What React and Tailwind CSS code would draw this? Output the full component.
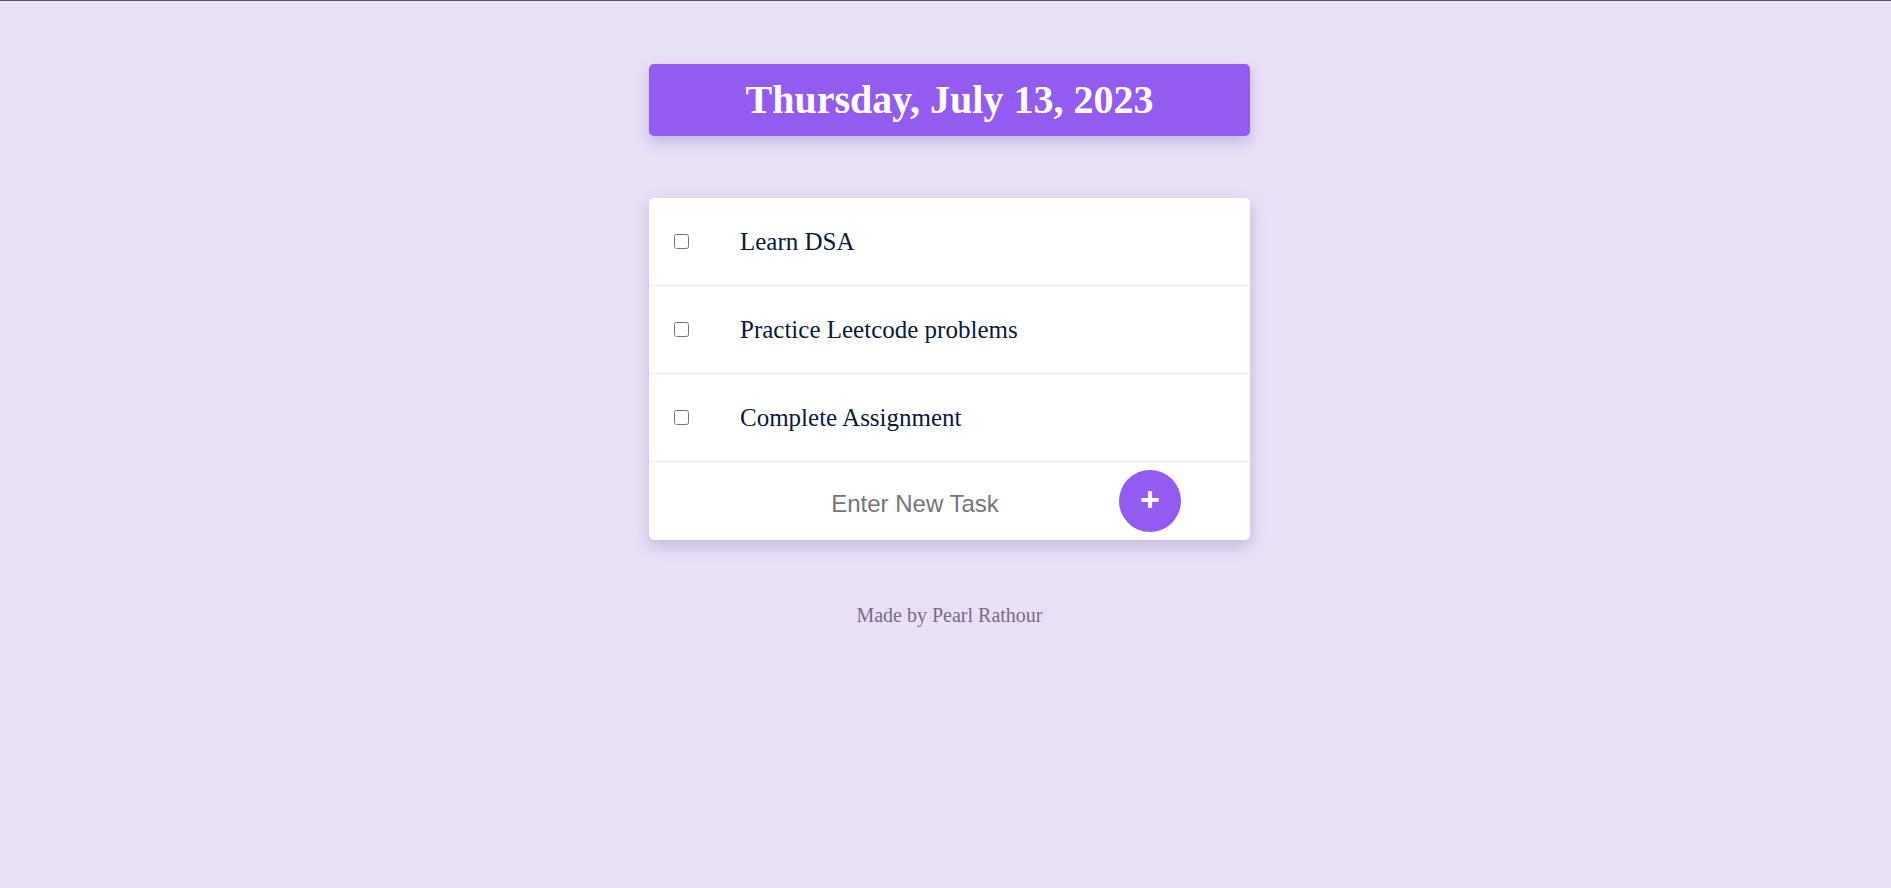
import React from "react";

const tasks = ["Learn DSA", "Practice Leetcode problems", "Complete Assignment"];

export default function App() {
  return (
    <div className="min-h-[888px] w-full bg-[#e9e0f8] border-t border-[#555555] flex flex-col items-center pl-[8px]" style={{ fontFamily: '"Liberation Serif", "Times New Roman", serif' }}>
      <div className="mt-[63px] w-[601px] h-[72px] rounded-[5px] bg-[#935bf0] flex items-center justify-center shadow-[0_6px_14px_rgba(90,60,140,0.25)]">
        <h1 className="text-white font-bold text-[40px] leading-none">Thursday, July 13, 2023</h1>
      </div>

      <div className="mt-[62px] w-[601px] bg-white rounded-[5px] shadow-[0_6px_16px_rgba(90,60,140,0.25)] overflow-hidden">
        {tasks.map((t) => (
          <div key={t} className="h-[88px] flex items-center border-b border-[#eeeeee]">
            <input type="checkbox" className="ml-[25px] w-[15px] h-[15px] m-0" />
            <span className="ml-[51px] text-[25px] text-[#061a40] leading-none">{t}</span>
          </div>
        ))}
        <div className="h-[78px] flex items-center justify-center gap-[7px]">
          <input
            type="text"
            placeholder="Enter New Task"
            className="w-[394px] mt-[6px] text-center text-[24px] outline-none bg-transparent placeholder:text-[#757575] text-[#333]"
            style={{ fontFamily: '"Liberation Sans", Arial, sans-serif' }}
          />
          <button
            className="w-[62px] h-[62px] rounded-full bg-[#935bf0] text-white text-[34px] font-bold leading-none flex items-center justify-center pb-[4px]"
            style={{ fontFamily: '"Liberation Sans", Arial, sans-serif' }}
          >
            +
          </button>
        </div>
      </div>

      <p className="mt-[60px] text-[20px] text-[#786c82]">Made by Pearl Rathour</p>
    </div>
  );
}
